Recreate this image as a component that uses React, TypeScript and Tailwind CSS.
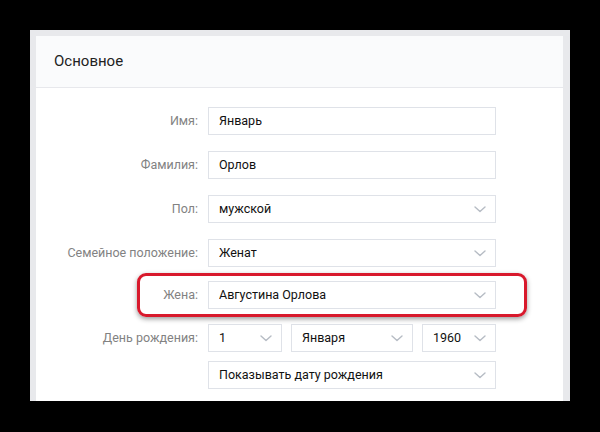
import React from "react";

const font = { fontFamily: "Roboto, 'Noto Sans', sans-serif" };

function Chevron() {
  return (
    <svg width="12" height="7" viewBox="0 0 12 7" className="shrink-0">
      <path d="M1 1l5 4.5L11 1" fill="none" stroke="#b6bcc4" strokeWidth="1.4" strokeLinecap="round" strokeLinejoin="round" />
    </svg>
  );
}

function Field({ value, select, className = "" }: { value: string; select?: boolean; className?: string }) {
  return (
    <div className={`h-[28px] border border-[#dfe2e8] bg-white flex items-center justify-between pl-[10px] pr-[9px] text-[12.5px] text-[#111] ${className}`}>
      <span className="truncate">{value}</span>
      {select && <Chevron />}
    </div>
  );
}

function Row({ label, children, className = "" }: { label: string; children: React.ReactNode; className?: string }) {
  return (
    <div className={`flex items-center ${className}`}>
      <div className="w-[163px] pr-[1px] text-right text-[12.5px] text-[#828282]">{label}</div>
      <div className="ml-[9px] w-[288px] flex gap-[9px]">{children}</div>
    </div>
  );
}

export default function App() {
  return (
    <div className="w-[600px] h-[432px] bg-black overflow-hidden pt-[30px] pl-[30px]" style={font}>
      <div className="w-[540px] h-[371px] bg-[#e8e9ec] pt-[6px] pl-[6px] pr-[7px]">
        <div className="relative bg-white h-[365px]">
          <div className="h-[52px] bg-[#fafbfc] border-b border-[#e7e8ec] flex items-center pl-[18px] text-[15px] text-[#222]">
            Основное
          </div>
          <div className="pt-[19px]">
            <Row label="Имя:">
              <Field value="Январь" className="flex-1" />
            </Row>
            <Row label="Фамилия:" className="mt-[16px]">
              <Field value="Орлов" className="flex-1" />
            </Row>
            <Row label="Пол:" className="mt-[16px]">
              <Field value="мужской" select className="flex-1" />
            </Row>
            <Row label="Семейное положение:" className="mt-[16px]">
              <Field value="Женат" select className="flex-1" />
            </Row>
            <Row label="Жена:" className="mt-[14px]">
              <Field value="Августина Орлова" select className="flex-1" />
            </Row>
            <Row label="День рождения:" className="mt-[15px]">
              <Field value="1" select className="w-[74px]" />
              <Field value="Января" select className="w-[122px]" />
              <Field value="1960" select className="flex-1" />
            </Row>
            <Row label="" className="mt-[9px]">
              <Field value="Показывать дату рождения" select className="flex-1" />
            </Row>
          </div>
          {/* red annotation frame */}
          <div className="absolute left-[101px] top-[237px] w-[390px] h-[44px] rounded-[9px] border-[3px] border-[#d8192c] shadow-[0_2px_5px_rgba(0,0,0,0.4)]" />
        </div>
      </div>
    </div>
  );
}
